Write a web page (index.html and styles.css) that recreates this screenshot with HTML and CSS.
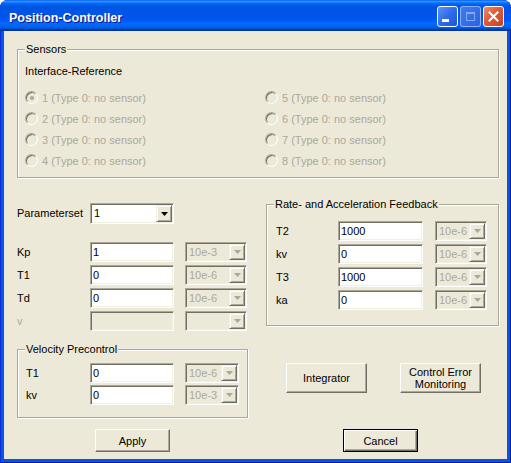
FILE: index.html
```html
<!DOCTYPE html>
<html>
<head>
<meta charset="utf-8">
<link rel="stylesheet" href="styles.css">
</head>
<body>
<div class="window">
  <div class="titlebar">
    <span class="title">Position-Controller</span>
    <div class="tb-buttons">
      <span class="tb tb-min"><span class="min-glyph"></span></span>
      <span class="tb tb-max"><span class="max-glyph"></span></span>
      <span class="tb tb-close"><svg width="11" height="11" viewBox="0 0 11 11"><path d="M1.5 1.5 L9.5 9.5 M9.5 1.5 L1.5 9.5" stroke="#fff" stroke-width="2" stroke-linecap="square"/></svg></span>
    </div>
  </div>
  <div class="client">
    <div class="group sensors">
      <div class="group-title">Sensors</div>
      <div class="iface">Interface-Reference</div>
      <div class="radios">
        <div class="radio-item"><span class="radio checked"></span><span>1 (Type 0: no sensor)</span></div>
        <div class="radio-item"><span class="radio"></span><span>2 (Type 0: no sensor)</span></div>
        <div class="radio-item"><span class="radio"></span><span>3 (Type 0: no sensor)</span></div>
        <div class="radio-item"><span class="radio"></span><span>4 (Type 0: no sensor)</span></div>
        <div class="radio-item"><span class="radio"></span><span>5 (Type 0: no sensor)</span></div>
        <div class="radio-item"><span class="radio"></span><span>6 (Type 0: no sensor)</span></div>
        <div class="radio-item"><span class="radio"></span><span>7 (Type 0: no sensor)</span></div>
        <div class="radio-item"><span class="radio"></span><span>8 (Type 0: no sensor)</span></div>
      </div>
    </div>

    <div class="main">
      <div class="left-col">
        <div class="pset-row">
          <span class="label pset-label">Parameterset</span>
          <div class="combo combo-pset">
            <span class="combo-val">1</span>
            <span class="combo-btn"><svg width="7" height="4" viewBox="0 0 7 4"><polygon points="0,0 7,0 3.5,4" fill="#000"/></svg></span>
          </div>
        </div>
        <div class="param-rows">
          <div class="row row-left">
            <span class="label">Kp</span>
            <div class="edit">1</div>
            <div class="combo combo-dis"><span class="combo-val">10e-3</span><span class="combo-btn"><svg width="7" height="4" viewBox="0 0 7 4"><polygon points="0,0 7,0 3.5,4" fill="#ACA899"/></svg></span></div>
          </div>
          <div class="row row-left">
            <span class="label">T1</span>
            <div class="edit">0</div>
            <div class="combo combo-dis"><span class="combo-val">10e-6</span><span class="combo-btn"><svg width="7" height="4" viewBox="0 0 7 4"><polygon points="0,0 7,0 3.5,4" fill="#ACA899"/></svg></span></div>
          </div>
          <div class="row row-left">
            <span class="label">Td</span>
            <div class="edit">0</div>
            <div class="combo combo-dis"><span class="combo-val">10e-6</span><span class="combo-btn"><svg width="7" height="4" viewBox="0 0 7 4"><polygon points="0,0 7,0 3.5,4" fill="#ACA899"/></svg></span></div>
          </div>
          <div class="row row-left">
            <span class="label disabled">v</span>
            <div class="edit edit-dis"></div>
            <div class="combo combo-dis"><span class="combo-val"></span><span class="combo-btn"><svg width="7" height="4" viewBox="0 0 7 4"><polygon points="0,0 7,0 3.5,4" fill="#ACA899"/></svg></span></div>
          </div>
        </div>
        <div class="group velocity">
          <div class="group-title">Velocity Precontrol</div>
          <div class="vel-rows">
            <div class="row row-vel">
              <span class="label">T1</span>
              <div class="edit">0</div>
              <div class="combo combo-dis"><span class="combo-val">10e-6</span><span class="combo-btn"><svg width="7" height="4" viewBox="0 0 7 4"><polygon points="0,0 7,0 3.5,4" fill="#ACA899"/></svg></span></div>
            </div>
            <div class="row row-vel">
              <span class="label">kv</span>
              <div class="edit">0</div>
              <div class="combo combo-dis"><span class="combo-val">10e-3</span><span class="combo-btn"><svg width="7" height="4" viewBox="0 0 7 4"><polygon points="0,0 7,0 3.5,4" fill="#ACA899"/></svg></span></div>
            </div>
          </div>
        </div>
      </div>

      <div class="right-col">
        <div class="group rate">
          <div class="group-title">Rate- and Acceleration Feedback</div>
          <div class="rate-rows">
            <div class="row row-rate">
              <span class="label">T2</span>
              <div class="edit">1000</div>
              <div class="combo combo-dis"><span class="combo-val">10e-6</span><span class="combo-btn"><svg width="7" height="4" viewBox="0 0 7 4"><polygon points="0,0 7,0 3.5,4" fill="#ACA899"/></svg></span></div>
            </div>
            <div class="row row-rate">
              <span class="label">kv</span>
              <div class="edit">0</div>
              <div class="combo combo-dis"><span class="combo-val">10e-6</span><span class="combo-btn"><svg width="7" height="4" viewBox="0 0 7 4"><polygon points="0,0 7,0 3.5,4" fill="#ACA899"/></svg></span></div>
            </div>
            <div class="row row-rate">
              <span class="label">T3</span>
              <div class="edit">1000</div>
              <div class="combo combo-dis"><span class="combo-val">10e-6</span><span class="combo-btn"><svg width="7" height="4" viewBox="0 0 7 4"><polygon points="0,0 7,0 3.5,4" fill="#ACA899"/></svg></span></div>
            </div>
            <div class="row row-rate">
              <span class="label">ka</span>
              <div class="edit">0</div>
              <div class="combo combo-dis"><span class="combo-val">10e-6</span><span class="combo-btn"><svg width="7" height="4" viewBox="0 0 7 4"><polygon points="0,0 7,0 3.5,4" fill="#ACA899"/></svg></span></div>
            </div>
          </div>
        </div>
        <div class="side-buttons">
          <div class="btn btn-tall">Integrator</div>
          <div class="btn btn-tall">Control Error<br>Monitoring</div>
        </div>
      </div>
    </div>

    <div class="bottom-row">
      <div class="btn btn-std">Apply</div>
      <div class="btn btn-std btn-default">Cancel</div>
    </div>
  </div>
</div>
</body>
</html>
```
FILE: styles.css
```css
* { box-sizing: border-box; }
html, body { margin: 0; padding: 0; background: #ffffff; }
body {
  width: 511px;
  height: 463px;
  overflow: hidden;
  font-family: "Liberation Sans", Arial, sans-serif;
  font-size: 11px;
  color: #000;
}
.window {
  width: 511px;
  height: 463px;
  display: flex;
  flex-direction: column;
  background: #0A54E2;
  border-radius: 8px 8px 0 0;
  box-shadow: inset 1px 0 #0831D9, inset -1px 0 #001EA0, inset 0 -1px #001EA0;
}
.titlebar {
  height: 31px;
  flex: none;
  display: flex;
  align-items: flex-start;
  padding: 0 7px 0 9px;
  border-radius: 8px 8px 0 0;
  background: linear-gradient(to bottom, #0058EE 0%, #3593FF 4%, #288EFF 6%, #127DFF 8%, #036FFC 10%, #0262EE 14%, #0057E5 20%, #0054E3 24%, #0055EB 56%, #005BF5 66%, #026AFE 76%, #0062EF 86%, #0052D6 92%, #0040AB 94%, #003092 100%);
}
.title {
  flex: 1;
  margin-top: 11px;
  line-height: 14px;
  font-weight: bold;
  font-size: 12.5px;
  color: #fff;
  text-shadow: 1px 1px #0A1883;
}
.tb-buttons {
  display: flex;
  gap: 2px;
  margin-top: 6px;
}
.tb {
  width: 21px;
  height: 21px;
  border: 1px solid #fff;
  border-radius: 3px;
  display: flex;
  align-items: center;
  justify-content: center;
}
.tb-min {
  background: linear-gradient(135deg, #5C93F6 0%, #2E6BEC 50%, #1C55D8 100%);
  align-items: flex-end;
  justify-content: flex-start;
  padding: 0 0 4px 4px;
}
.min-glyph { width: 7px; height: 3px; background: #fff; }
.tb-max {
  border-color: rgba(255,255,255,0.45);
  background: linear-gradient(135deg, #3E7CF0 0%, #2A63E0 100%);
}
.max-glyph {
  width: 9px;
  height: 9px;
  border: 1px solid rgba(255,255,255,0.4);
  border-top-width: 2px;
}
.tb-close {
  background: linear-gradient(135deg, #F08A6C 0%, #E0593B 45%, #C8411F 100%);
}
.client {
  flex: 1;
  margin: 0 4px 4px;
  background: #ECE9D8;
}
.group {
  border: 1px solid #ACA899;
  box-shadow: inset 1px 1px #fff, 1px 1px #fff;
}
.group-title {
  width: fit-content;
  margin: -7px 0 0 7px;
  padding: 0 1px;
  line-height: 13px;
  background: #ECE9D8;
}
.sensors {
  margin: 18px 0 0 13px;
  width: 482px;
  height: 129px;
}
.iface {
  margin: 9px 0 0 7px;
  line-height: 13px;
}
.radios {
  margin: 9px 0 0 7px;
  display: grid;
  grid-template-columns: 240px auto;
  grid-template-rows: repeat(4, 21px);
  grid-auto-flow: column;
  color: #ACA899;
}
.radio-item {
  display: flex;
  align-items: center;
  gap: 4px;
}
.radio {
  width: 13px;
  height: 13px;
  border-radius: 50%;
  border: 1px solid;
  border-color: #ACA899 #FFFFFF #FFFFFF #ACA899;
  box-shadow: inset 1px 1px #716F64;
  background: #ECE9D8;
  display: flex;
  align-items: center;
  justify-content: center;
}
.radio.checked::after {
  content: "";
  width: 4px;
  height: 4px;
  border-radius: 50%;
  background: #ACA899;
}
.main {
  display: flex;
  align-items: flex-start;
  margin: 25px 0 0 13px;
  gap: 18px;
}
.left-col { width: 231px; }
.right-col { width: 233px; margin-top: 1px; }
.pset-row {
  display: flex;
  align-items: center;
  height: 21px;
}
.label { line-height: 13px; }
.pset-label { width: 73px; }
.disabled { color: #ACA899; }
.param-rows {
  margin-top: 18px;
  display: flex;
  flex-direction: column;
  gap: 3px;
}
.row {
  display: grid;
  align-items: center;
  height: 20px;
}
.row-left { grid-template-columns: 73px 84px 62px; }
.row-left .combo { margin-left: 11px; width: 62px; }
.edit {
  height: 20px;
  background: #fff;
  border: 1px solid;
  border-color: #ACA899 #FFFFFF #FFFFFF #ACA899;
  box-shadow: inset 1px 1px #716F64, inset -1px -1px #F1EFE2;
  padding: 0 2px;
  line-height: 18px;
  white-space: nowrap;
  overflow: hidden;
}
.edit-dis { background: #ECE9D8; }
.combo {
  display: flex;
  height: 20px;
  border: 1px solid;
  border-color: #ACA899 #FFFFFF #FFFFFF #ACA899;
  box-shadow: inset 1px 1px #716F64, inset -1px -1px #F1EFE2;
  padding: 1px;
}
.combo-val {
  flex: 1;
  padding-left: 2px;
  line-height: 16px;
  white-space: nowrap;
  overflow: hidden;
}
.combo-btn {
  width: 16px;
  flex: none;
  background: #ECE9D8;
  border: 1px solid;
  border-color: #F1EFE2 #716F64 #716F64 #F1EFE2;
  box-shadow: inset 1px 1px #fff, inset -1px -1px #ACA899;
  display: flex;
  align-items: center;
  justify-content: center;
}
.combo-btn svg { display: block; }
.combo-pset {
  width: 84px;
  height: 21px;
  background: #fff;
}
.combo-pset .combo-val { line-height: 17px; }
.combo-dis { background: #ECE9D8; color: #ACA899; }
.velocity {
  margin-top: 18px;
  width: 231px;
  padding: 0 0 12px 0;
}
.vel-rows {
  margin-top: 7px;
  padding-left: 8px;
  display: flex;
  flex-direction: column;
  gap: 2px;
}
.row-vel { grid-template-columns: 64px 84px 65px; }
.row-vel .combo { margin-left: 11px; width: 54px; }
.rate {
  width: 233px;
  padding: 0 0 15px 0;
}
.rate-rows {
  margin-top: 10px;
  padding-left: 9px;
  display: flex;
  flex-direction: column;
  gap: 3px;
}
.row-rate { grid-template-columns: 62px 85px 64px; }
.row-rate .combo { margin-left: 12px; width: 52px; }
.side-buttons {
  display: flex;
  gap: 33px;
  margin: 37px 0 0 20px;
}
.btn {
  background: #ECE9D8;
  border: 1px solid;
  border-color: #FFFFFF #716F64 #716F64 #FFFFFF;
  box-shadow: inset -1px -1px #ACA899;
  display: flex;
  align-items: center;
  justify-content: center;
  text-align: center;
  line-height: 12px;
}
.btn-tall { width: 81px; height: 30px; }
.btn-std { width: 75px; height: 23px; }
.btn-default {
  border: 1px solid #000;
  box-shadow: inset 1px 1px #fff, inset -1px -1px #716F64, inset -2px -2px #ACA899;
}
.bottom-row {
  display: flex;
  gap: 173px;
  margin: 11px 0 0 91px;
}
```
